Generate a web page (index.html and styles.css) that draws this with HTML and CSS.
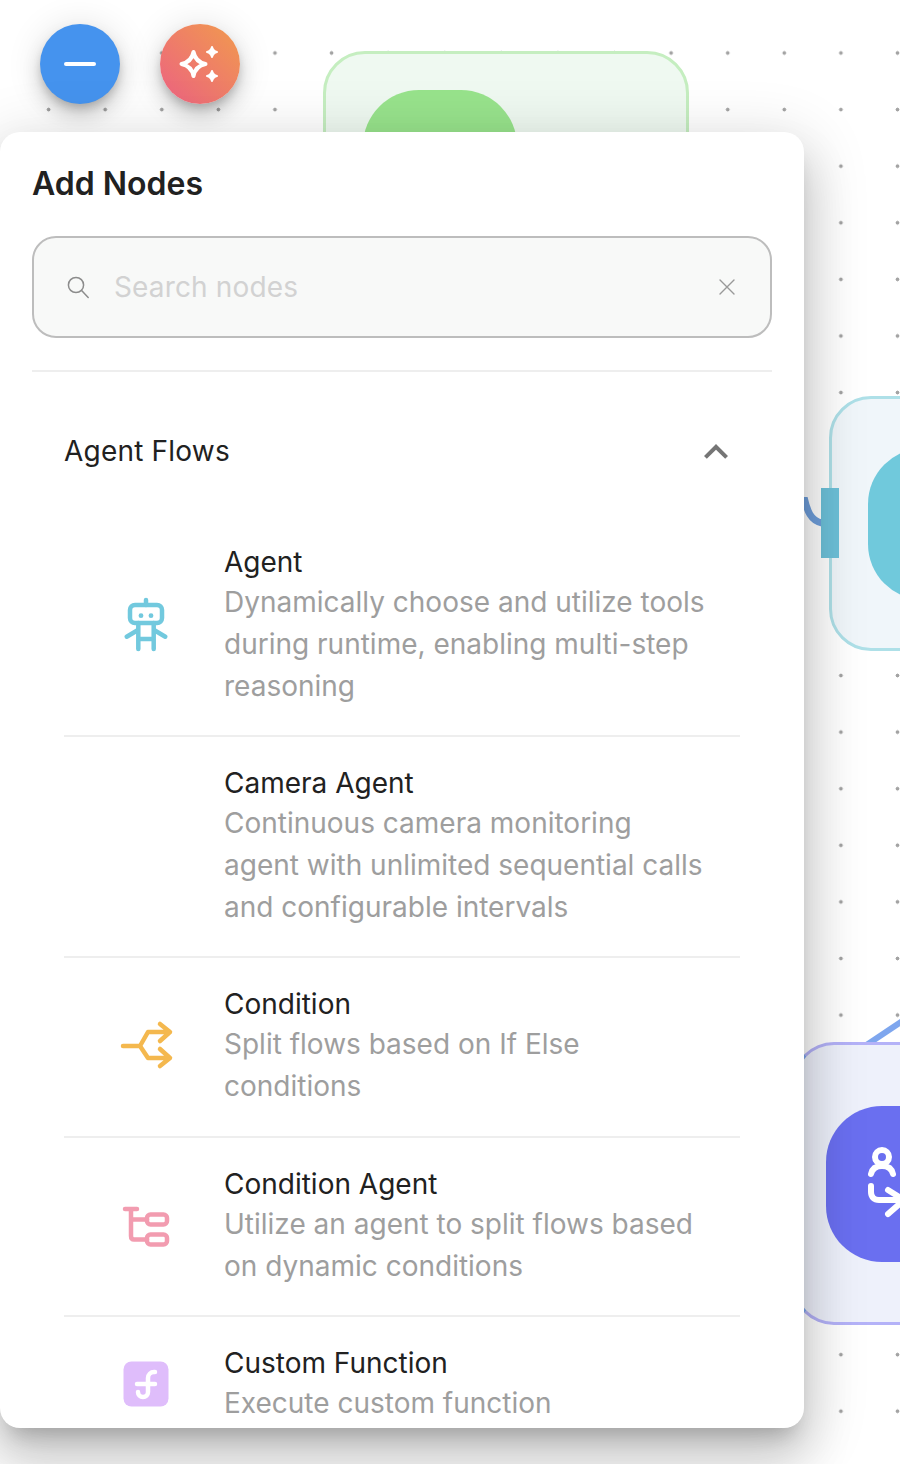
FILE: index.html
```html
<!DOCTYPE html>
<html lang="en">
<head>
    <meta charset="UTF-8">
    <meta name="viewport" content="width=device-width, initial-scale=1.0">
    <title>Add Nodes</title>
    <link rel="stylesheet" href="styles.css">
</head>
<body>
    <main class="canvas">
        <!-- flow nodes behind the panel -->
        <div class="node node-green"><div class="node-badge"></div></div>

        <svg class="edge edge-blue" width="40" height="50" viewBox="0 0 40 50">
            <path d="M2 0 C5 14 9 24 20 26" fill="none" stroke="#6f9fdc" stroke-width="7"/>
        </svg>
        <div class="node node-cyan">
            <div class="node-badge"></div>
        </div>
        <div class="handle"></div>

        <svg class="edge edge-purple" width="50" height="36" viewBox="0 0 50 36">
            <path d="M2 34 L50 2" fill="none" stroke="#7ea6ee" stroke-width="6"/>
        </svg>
        <div class="node node-purple">
            <div class="node-badge">
                <svg class="badge-icon" width="60" height="90" viewBox="0 0 60 90" fill="none" stroke="#fff" stroke-width="6" stroke-linecap="round" stroke-linejoin="round">
                    <circle cx="27" cy="20" r="7"/>
                    <path d="M16 37c1-5 5-8 11-8s10 3 11 8"/>
                    <path d="M16 49v6c0 5 3 8 8 8h26"/>
                    <path d="M33 53l16 10-16 14"/>
                </svg>
            </div>
        </div>

        <div class="toolbar">
            <button class="fab fab-blue" aria-label="Close">
                <svg width="36" height="8" viewBox="0 0 36 8"><path d="M4 4h28" stroke="#fff" stroke-width="4" stroke-linecap="round"/></svg>
            </button>
            <button class="fab fab-orange" aria-label="Generate">
                <svg width="80" height="80" viewBox="0 0 80 80" fill="none" stroke="#fff" stroke-linejoin="round">
                    <path d="M33.5 28 Q35.5 38 45.5 40 Q35.5 42 33.5 52 Q31.5 42 21.5 40 Q31.5 38 33.5 28Z" stroke-width="4"/>
                    <path d="M52 23 Q53 27 57 28 Q53 29 52 33 Q51 29 47 28 Q51 27 52 23Z" fill="#fff" stroke-width="2"/>
                    <path d="M52 47 Q53 51 57 52 Q53 53 52 57 Q51 53 47 52 Q51 51 52 47Z" fill="#fff" stroke-width="2"/>
                </svg>
            </button>
        </div>

        <section class="panel">
            <h1 class="panel-title">Add Nodes</h1>

            <div class="search">
                <svg class="search-icon" width="24" height="24" viewBox="0 0 24 24" fill="none" stroke="#8c8c8c" stroke-width="1.5" stroke-linecap="round">
                    <circle cx="10" cy="10" r="7.6"/>
                    <path d="M15.6 15.6l6.6 6.8"/>
                </svg>
                <input class="search-input" type="text" placeholder="Search nodes">
                <svg class="clear-icon" width="18" height="18" viewBox="0 0 18 18" stroke="#999" stroke-width="1.4" stroke-linecap="round">
                    <path d="M2 2l14 14M16 2L2 16"/>
                </svg>
            </div>

            <hr class="divider">

            <div class="group-header">
                <span class="group-name">Agent Flows</span>
                <svg width="48" height="48" viewBox="0 0 24 24" fill="#757575"><path d="m12 8-6 6 1.41 1.41L12 10.83l4.59 4.58L18 14z"/></svg>
            </div>

            <ul class="node-list">
                <li class="node-item">
                    <div class="item-icon">
                        <svg width="60" height="60" viewBox="0 0 60 60" fill="none" stroke="#72c9de" stroke-width="4.5" stroke-linecap="round" stroke-linejoin="round">
                            <rect x="14" y="10" width="32" height="18" rx="5"/>
                            <path d="M30 5v5M22.3 28v26M37.7 28v26M22.3 44h15.4M10.7 41.7L22 35M49.3 41.7L38 35"/>
                            <circle cx="25" cy="20.7" r="2.4" fill="#72c9de" stroke="none"/>
                            <circle cx="35" cy="20.7" r="2.4" fill="#72c9de" stroke="none"/>
                        </svg>
                    </div>
                    <div class="item-text">
                        <div class="item-name">Agent</div>
                        <div class="item-desc">Dynamically choose and utilize tools during runtime, enabling multi-step reasoning</div>
                    </div>
                </li>
                <li class="node-item">
                    <div class="item-icon"></div>
                    <div class="item-text">
                        <div class="item-name">Camera Agent</div>
                        <div class="item-desc">Continuous camera monitoring agent with unlimited sequential calls and configurable intervals</div>
                    </div>
                </li>
                <li class="node-item">
                    <div class="item-icon">
                        <svg width="60" height="60" viewBox="0 0 60 60" fill="none" stroke="#f4b84e" stroke-width="4.5" stroke-linecap="round" stroke-linejoin="round">
                            <path d="M7 30h17l8-14h21M24 30l8 12h21M44 8l10 8-10 9M44 33l10 9-10 8"/>
                        </svg>
                    </div>
                    <div class="item-text">
                        <div class="item-name">Condition</div>
                        <div class="item-desc">Split flows based on If Else conditions</div>
                    </div>
                </li>
                <li class="node-item">
                    <div class="item-icon">
                        <svg width="60" height="60" viewBox="0 0 60 60" fill="none" stroke="#f29cb0" stroke-width="4.5" stroke-linecap="round" stroke-linejoin="round">
                            <path d="M9 13h12M15 13v27c0 2 1 3.5 3 3.5h13M15 23.5h16"/>
                            <rect x="31" y="18.5" width="20" height="10" rx="3.5"/>
                            <rect x="31" y="38.5" width="20" height="10" rx="3.5"/>
                        </svg>
                    </div>
                    <div class="item-text">
                        <div class="item-name">Condition Agent</div>
                        <div class="item-desc">Utilize an agent to split flows based on dynamic conditions</div>
                    </div>
                </li>
                <li class="node-item">
                    <div class="item-icon">
                        <svg width="60" height="60" viewBox="0 0 60 60" fill="none">
                            <rect x="7.5" y="7.5" width="45" height="45" rx="8" fill="#dfbdfb"/>
                            <path d="M39 18h-1a6 6 0 0 0-6 6v14a5 5 0 0 1-10 0M21 30h18" stroke="#fff" stroke-width="4.5" stroke-linecap="round"/>
                        </svg>
                    </div>
                    <div class="item-text">
                        <div class="item-name">Custom Function</div>
                        <div class="item-desc">Execute custom function</div>
                    </div>
                </li>
            </ul>
        </section>
    </main>
</body>
</html>
```

FILE: styles.css
```css
* {
    box-sizing: border-box;
}

body {
    margin: 0;
    font-family: "Inter", "Liberation Sans", sans-serif;
    color: #212121;
    background: #fff;
}

.canvas {
    position: relative;
    height: 1464px;
    overflow: hidden;
    padding: 24px 0 0;
    background-color: #fff;
    background-image: radial-gradient(circle, #a3a3a3 1.7px, transparent 2.2px);
    background-size: 56.6px 56.6px;
    background-position: 20.3px 24.7px;
}

/* canvas nodes */
.node {
    position: absolute;
    border: 3px solid;
    border-radius: 42px;
}

.node-badge {
    position: absolute;
    border-radius: 56px;
}

.node-green {
    left: 323px;
    top: 51px;
    width: 366px;
    height: 260px;
    background: #eff9f1;
    border-color: #c5eec0;
}

.node-green .node-badge {
    left: 37px;
    top: 36px;
    width: 154px;
    height: 154px;
    background: #98e38c;
}

.node-cyan {
    left: 829px;
    top: 396px;
    width: 300px;
    height: 255px;
    background: #f0f6fa;
    border-color: #aee0e8;
}

.node-cyan .node-badge {
    left: 36px;
    top: 49px;
    width: 200px;
    height: 152px;
    background: #70c9dc;
}

.handle {
    position: absolute;
    left: 821px;
    top: 488px;
    width: 18px;
    height: 70px;
    background: #6dc1d9;
}

.edge {
    position: absolute;
}

.edge-blue {
    left: 802px;
    top: 497px;
}

.edge-purple {
    left: 860px;
    top: 1014px;
}

.node-purple {
    left: 792px;
    top: 1042px;
    width: 300px;
    height: 283px;
    background: #eef1fb;
    border-color: #b4b2f8;
    border-left-color: #7ea6ee;
}

.node-purple .node-badge {
    left: 31px;
    top: 61px;
    width: 200px;
    height: 156px;
    background: #6a6ff0;
}

.badge-icon {
    position: absolute;
    left: 29px;
    top: 31px;
}

/* round buttons */
.toolbar {
    position: relative;
    display: flex;
    gap: 40px;
    padding-left: 40px;
}

.fab {
    width: 80px;
    height: 80px;
    padding: 0;
    border: none;
    border-radius: 50%;
    display: flex;
    align-items: center;
    justify-content: center;
    box-shadow: 0 6px 10px -2px rgba(0, 0, 0, 0.2), 0 12px 20px 0 rgba(0, 0, 0, 0.14), 0 2px 36px 0 rgba(0, 0, 0, 0.12);
}

.fab-blue {
    background: #4593ee;
}

.fab-orange {
    background: linear-gradient(45deg, #ed6a7a 15%, #f09255 85%);
}

/* add nodes panel */
.panel {
    position: relative;
    margin-top: 28px;
    width: 804px;
    height: 1296px;
    overflow: hidden;
    padding: 0 32px;
    background: #fff;
    border-radius: 20px;
    box-shadow: 0 16px 20px -10px rgba(0, 0, 0, 0.2), 0 32px 48px 4px rgba(0, 0, 0, 0.14), 0 12px 60px 10px rgba(0, 0, 0, 0.12);
}

.panel-title {
    margin: 32px 0 0;
    font-size: 32px;
    line-height: 40px;
    font-weight: 600;
    color: #212121;
}

.search {
    display: flex;
    align-items: center;
    height: 102px;
    margin-top: 32px;
    padding: 0 34px 0 32px;
    background: #f8f9f8;
    border: 2px solid #bdbdbd;
    border-radius: 24px;
}

.search-input {
    flex: 1;
    margin-left: 22px;
    border: none;
    outline: none;
    background: transparent;
    font-family: inherit;
    font-size: 28px;
    letter-spacing: 0.15px;
    color: #212121;
}

.search-input::placeholder {
    color: #d2d2d2;
    opacity: 1;
}

.divider {
    height: 2px;
    margin: 32px 0 0;
    border: none;
    background: #eeeeee;
}

.group-header {
    display: flex;
    align-items: center;
    justify-content: space-between;
    height: 48px;
    margin-top: 56px;
    padding: 0 32px;
    font-size: 28px;
    color: #212121;
}

.group-name {
    padding-bottom: 2px;
    letter-spacing: 0.2px;
}

.node-list {
    list-style: none;
    margin: 40px 32px 0;
    padding: 0;
}

.node-item {
    display: flex;
    align-items: center;
    padding: 27px 0 28.2px;
    border-bottom: 2px solid #eeeeee;
}

.node-item:last-child {
    border-bottom: none;
}

.item-icon {
    flex: none;
    width: 60px;
    height: 60px;
    margin: 0 48px 0 52px;
}

.item-icon svg {
    display: block;
}

.item-text {
    width: 484px;
}

.item-name {
    font-size: 28px;
    line-height: 38px;
    color: #212121;
}

.item-desc {
    font-size: 28px;
    line-height: 42px;
    color: #9e9e9e;
}
```
